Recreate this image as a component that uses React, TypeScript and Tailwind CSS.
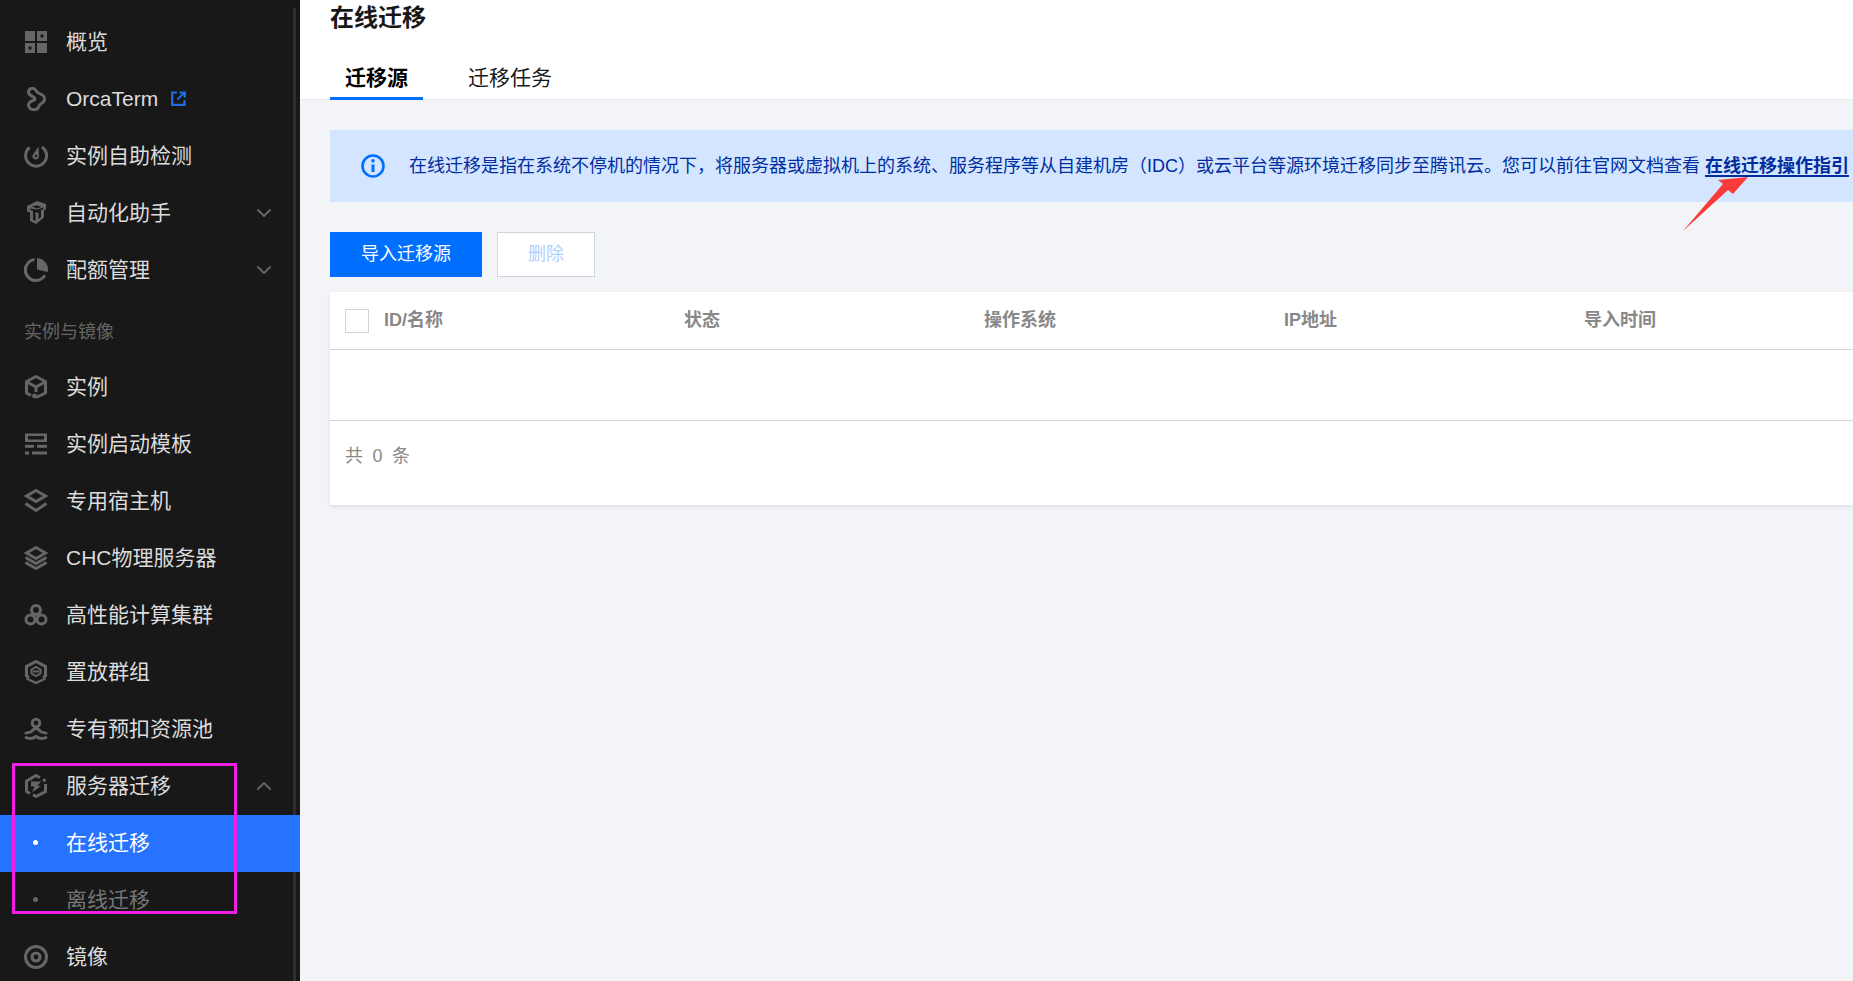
import { ChevronDown, ChevronUp } from "lucide-react"

const Grid = () => (
    <svg viewBox="0 0 24 24" className="w-6 h-6" fill="#666">
        <rect x="1" y="1" width="10" height="10" />
        <rect x="13" y="13" width="10" height="10" />
        <path fillRule="evenodd" d="M13 1h10v10H13zM16.500 4.500v3h3v-3zM1 13h10v10H1zM4.500 16.500v3h3v-3z" />
    </svg>
)

const Orca = () => (
    <svg viewBox="0 0 24 24" className="w-6 h-6" fill="none" stroke="#666" strokeWidth="3" strokeLinejoin="round">
        <path d="M4.500 5C4.500 1 10 0 12 3.500c1 2.500 3 3 5.500 4 4 2 4 6.500.5 8.500-2.500 1.500-3 2-3.500 4-1 3.500-8 3.500-9.500 0-1.500-3.500 1-5.500 4-6.500 2.500-1 2.500-2.500.5-3.500C6.500 8.500 4.500 8 4.500 5z" />
    </svg>
)

const Gauge = () => (
    <svg viewBox="0 0 24 24" className="w-6 h-6" fill="none" stroke="#666" strokeWidth="3">
        <path d="M5.500 3.500A10.500 10.500 0 1 0 18 3" />
        <path d="M8.500 11.500l6-9 .5 10a3.300 3.300 0 1 1-6.500-1z" fill="#666" stroke="none" />
        <circle cx="12" cy="12" r="1.200" fill="#181818" stroke="none" />
    </svg>
)

const Robot = () => (
    <svg viewBox="0 0 24 24" className="w-6 h-6" fill="#666">
        <path fillRule="evenodd" d="M13 0l9 3v5.500l-2 .7v7.300l-8 6.500-6-3v-8.500L3 10.500V5zM6 7.500v1.300l3 1v9l2.500 1.300V11l3 1v6l2.500-2V9l2.500-.8V6.500l-6 2zM8 5.500l5 2 4.500-1.500-4.500-1.800z" />
    </svg>
)

const Pie = () => (
    <svg viewBox="0 0 24 24" className="w-6 h-6" fill="#666">
        <path fillRule="evenodd" d="M10.500 0.100V3A9 9 0 1 0 19.700 16.500l2.500 1.500A12 12 0 1 1 10.500 0.100z" />
        <path d="M13 0a11.500 11.500 0 0 1 10.700 14L13 11.500z" />
    </svg>
)

const Cube = () => (
    <svg viewBox="0 0 24 24" className="w-6 h-6" fill="none" stroke="#666" strokeWidth="3" strokeLinejoin="round">
        <path d="M7 20.500L2.500 18V6.500L12 1.500l9.500 5V18L12 22.500" />
        <path d="M3 7l9 5 9-5M12 12v5" />
        <circle cx="10.500" cy="21" r="2.400" fill="#666" stroke="none" />
    </svg>
)

const Template = () => (
    <svg viewBox="0 0 24 24" className="w-6 h-6" fill="#666">
        <path fillRule="evenodd" d="M1 1.500h22V10H1zM4 4v3.500h16V4z" />
        <rect x="1" y="12.800" width="9" height="3" />
        <rect x="13" y="12.800" width="10" height="3" />
        <rect x="1" y="19.500" width="4" height="3" />
        <rect x="8" y="19.500" width="15" height="3" />
    </svg>
)

const Layers = ({ double }: { double?: boolean }) => (
    <svg viewBox="0 0 24 24" className="w-6 h-6" fill="none" stroke="#666" strokeWidth="3">
        {double ? (
            <>
                <path d="M12 1.500L21.500 7 12 12.500 2.500 7z" />
                <path d="M1.500 11.500l10.500 6 10.500-6" />
                <path d="M1.500 16.500l10.500 6 10.500-6" />
            </>
        ) : (
            <>
                <path d="M12 1.500L21.500 7 12 12.500 2.500 7z" />
                <path d="M1.500 14.500l10.500 7 10.500-7" />
            </>
        )}
    </svg>
)

const Cluster = () => (
    <svg viewBox="0 0 24 24" className="w-6 h-6" fill="none" stroke="#666" strokeWidth="3">
        <circle cx="12" cy="7" r="4.500" />
        <circle cx="6.500" cy="16.500" r="4.500" />
        <circle cx="17.500" cy="16.500" r="4.500" />
    </svg>
)

const HexList = () => (
    <svg viewBox="0 0 24 24" className="w-6 h-6" fill="none" stroke="#666" strokeWidth="3">
        <path d="M5 17.500l-2.500-1.500V6.500L12 1.500l9.500 5V16L19 17.500" />
        <path d="M2.500 18.500L12 23l9.500-4.500" strokeWidth="2.400" />
        <path d="M7.500 9.500L12 7l4.500 2.500v4L12 16l-4.500-2.500z" strokeWidth="2" />
        <path d="M9 11.500h6" strokeWidth="2" />
    </svg>
)

const Pool = () => (
    <svg viewBox="0 0 24 24" className="w-6 h-6" fill="none" stroke="#666" strokeWidth="2.800">
        <circle cx="12" cy="6" r="3.800" />
        <path d="M12 11.500c-3 0-3.500 2.500-5.500 3.500-2 1-4.500.5-5.500 2M12 11.500c3 0 3.500 2.500 5.500 3.500 2 1 4.500.5 5.500 2" />
        <path d="M1 20c3.500 2 7.500 2 11-.5 3.500 2.500 7.500 2.500 11 .5" />
    </svg>
)

const Migrate = () => (
    <svg viewBox="0 0 24 24" className="w-6 h-6" fill="none" stroke="#666" strokeWidth="3">
        <path d="M6 19.500L2.500 17.500V7L12 1.500l4 2.200" />
        <path d="M21.500 10v7.500L12 22.500l-3-1.700" />
        <path d="M19 5.500l2.500 1.500" />
        <path d="M7 7.500h10l-3.500 4.500H17l-9 6.500 2.500-6H7z" fill="#666" stroke="none" />
    </svg>
)

const Disc = () => (
    <svg viewBox="0 0 24 24" className="w-6 h-6" fill="none" stroke="#666">
        <circle cx="12" cy="12" r="10.500" strokeWidth="3" />
        <circle cx="12" cy="12" r="4" strokeWidth="3.200" />
    </svg>
)

const rows = [
    { icon: <Cube />, label: "实例" },
    { icon: <Template />, label: "实例启动模板" },
    { icon: <Layers />, label: "专用宿主机" },
    { icon: <Layers double />, label: "CHC物理服务器" },
    { icon: <Cluster />, label: "高性能计算集群" },
    { icon: <HexList />, label: "置放群组" },
    { icon: <Pool />, label: "专有预扣资源池" },
]

function MenuItem({ icon, label, children }: { icon: React.ReactNode; label: string; children?: React.ReactNode }) {
    return (
        <div className="h-[57px] pb-[2px] flex items-center pl-6 pr-6 text-[21px] text-[#dcdcdc]">
            <span className="w-6 h-6 shrink-0 mr-[18px]">{icon}</span>
            <span className="whitespace-nowrap">{label}</span>
            {children}
        </div>
    )
}

function Sidebar() {
    return (
        <aside className="w-[300px] shrink-0 h-full bg-[#181818] pt-[14px] relative overflow-hidden">
            <MenuItem icon={<Grid />} label="概览" />
            <MenuItem icon={<Orca />} label="OrcaTerm">
                <svg viewBox="0 0 15 15" className="w-[15px] h-[15px] ml-[13px]" fill="none" stroke="#1f6ce6" strokeWidth="2.200">
                    <path d="M6 1.500H1.200v12.300h12.300V9" />
                    <path d="M6.500 8.500L13 2" />
                    <path d="M8.500 1.500h5.300v5" />
                </svg>
            </MenuItem>
            <MenuItem icon={<Gauge />} label="实例自助检测" />
            <MenuItem icon={<Robot />} label="自动化助手">
                <ChevronDown className="w-6 h-6 ml-auto text-[#666]" strokeWidth={1.8} />
            </MenuItem>
            <MenuItem icon={<Pie />} label="配额管理">
                <ChevronDown className="w-6 h-6 ml-auto text-[#666]" strokeWidth={1.8} />
            </MenuItem>
            <div className="h-[60px] pt-[7px] flex items-center pl-6 text-[18px] text-[#666]">实例与镜像</div>
            {rows.map((row) => (
                <MenuItem key={row.label} icon={row.icon} label={row.label} />
            ))}
            <MenuItem icon={<Migrate />} label="服务器迁移">
                <ChevronUp className="w-6 h-6 ml-auto text-[#666]" strokeWidth={1.8} />
            </MenuItem>
            <div className="h-[57px] pb-[2px] relative z-10 flex items-center bg-[#2573ff] text-[21px] text-white">
                <span className="w-[5px] h-[5px] rounded-full bg-white ml-[33px] mr-[28px]" />
                在线迁移
            </div>
            <div className="h-[57px] pb-[2px] flex items-center text-[21px] text-[#777]">
                <span className="w-[5px] h-[5px] rounded-full bg-[#666] ml-[33px] mr-[28px]" />
                离线迁移
            </div>
            <MenuItem icon={<Disc />} label="镜像" />
            <div className="absolute top-2 bottom-0 left-[293px] w-[3px] bg-[#333] opacity-80" />
            <div className="absolute z-20 top-[763px] left-3 w-[225px] h-[151px] border-[3px] border-[#f01fe6]" />
        </aside>
    )
}

const columns = ["状态", "操作系统", "IP地址", "导入时间"]

function Main() {
    return (
        <main className="flex-1 min-w-0 h-full bg-[#f2f4f8] relative overflow-hidden">
            <div className="h-[100px] bg-white border-b border-[#e8eaee] pl-[30px]">
                <h1 className="text-[24px] leading-[36px] font-bold text-[#181818]">在线迁移</h1>
                <div className="flex mt-[23px] text-[21px] leading-[38px] text-[#181818]">
                    <div className="w-[93px] h-[41px] text-center font-bold border-b-[3px] border-[#006eff] text-black">迁移源</div>
                    <div className="ml-[45px]">迁移任务</div>
                </div>
            </div>
            <div className="ml-[30px] mt-[30px] h-[72px] bg-[#d4e5ff] flex items-center pl-[31px] text-[18px] text-[#002da0] whitespace-nowrap">
                <svg viewBox="0 0 24 24" className="w-6 h-6 shrink-0 mr-6" fill="none" stroke="#006eff" strokeWidth="2.600">
                    <circle cx="12" cy="12" r="10.500" />
                    <path d="M12 10.500v7.500" strokeWidth="3" />
                    <circle cx="12" cy="6.800" r="1.800" fill="#006eff" stroke="none" />
                </svg>
                <span>
                    在线迁移是指在系统不停机的情况下，将服务器或虚拟机上的系统、服务程序等从自建机房（IDC）或云平台等源环境迁移同步至腾讯云。您可以前往官网文档查看
                    <a className="ml-[5px] font-bold underline decoration-2 underline-offset-[3px]">在线迁移操作指引</a>
                </span>
            </div>
            <div className="ml-[30px] mt-[30px] flex gap-[15px] text-[18px]">
                <button className="w-[152px] h-[45px] bg-[#006eff] text-white">导入迁移源</button>
                <button className="w-[98px] h-[45px] bg-white border border-[#cfd5de] text-[#b2d0ff]">删除</button>
            </div>
            <div className="ml-[30px] mt-[15px] bg-white shadow-[0_2px_4px_rgba(54,58,80,0.1)] text-[18px]">
                <div className="h-[58px] flex items-center pl-[15px] border-b border-[#cfd5de] font-bold text-[#888]">
                    <span className="w-6 h-6 border border-[#cfd5de] mr-[15px] shrink-0" />
                    <span className="w-[300px] shrink-0">ID/名称</span>
                    {columns.map((column) => (
                        <span key={column} className="w-[300px] shrink-0">{column}</span>
                    ))}
                </div>
                <div className="h-[71px] border-b border-[#cfd5de]" />
                <div className="h-[84px] pb-[14px] flex items-center pl-[15px] text-[#888] tracking-[0.5px]">
                    <span>共</span>
                    <span className="mx-[9px]">0</span>
                    <span>条</span>
                </div>
            </div>
            <svg viewBox="0 0 70 58" className="absolute left-[1381px] top-[175px] w-[70px] h-[58px]" fill="#fb3a3a">
                <path d="M67 2L52 19l-5-4L2 56l40-47-5-4z" />
            </svg>
        </main>
    )
}

export default function App() {
    return (
        <div className="flex w-[1853px] h-[981px] overflow-hidden font-['Liberation_Sans','Noto_Sans_CJK_SC',sans-serif]">
            <Sidebar />
            <Main />
        </div>
    )
}
